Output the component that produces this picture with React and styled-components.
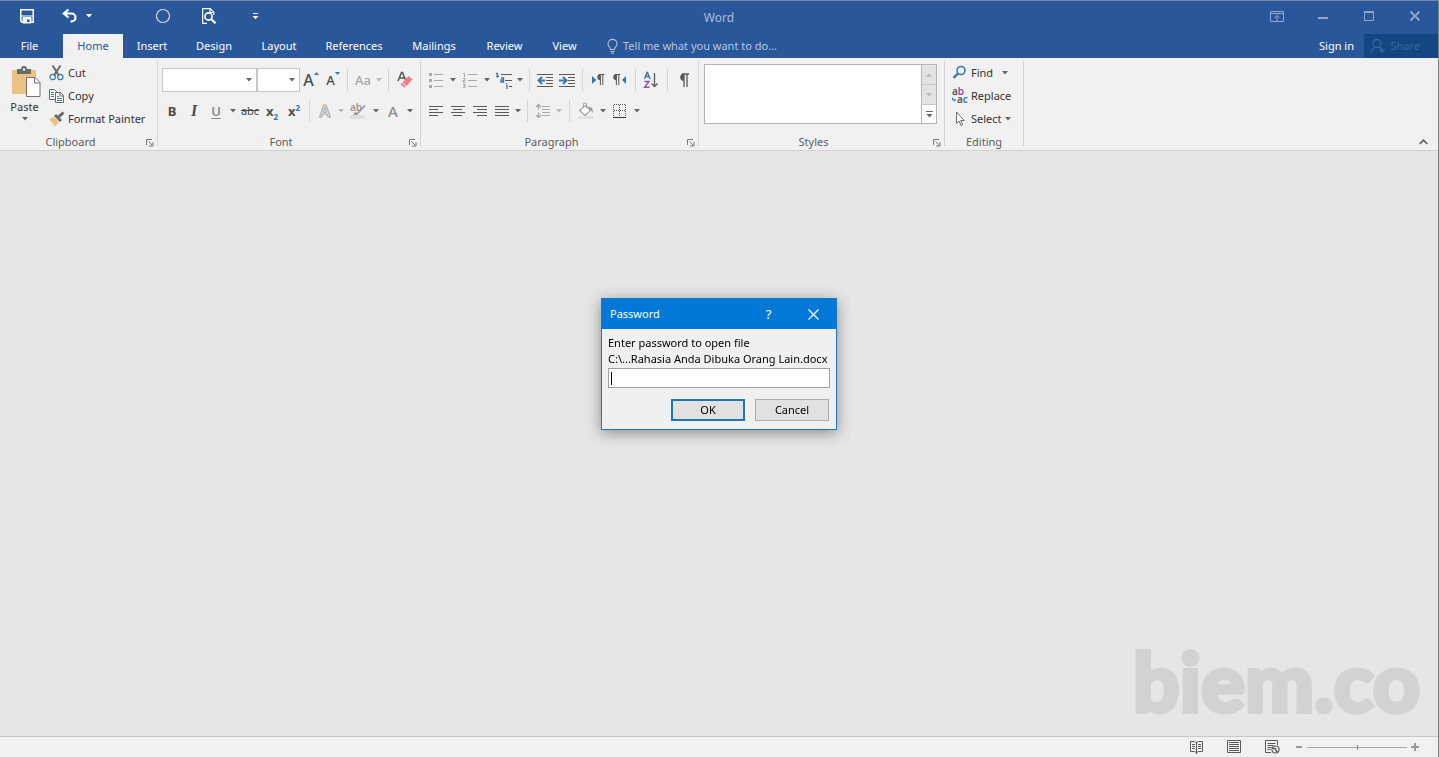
import React from 'react';
import styled, { createGlobalStyle, css } from 'styled-components';

const BLUE = '#2a579a';
const INK = '#5a5a5a';
const PALE = '#a8a8a8';
const ACCENT = '#3b78b0';

const GlobalStyle = createGlobalStyle`
	* {
		box-sizing: border-box;
	}
	body {
		margin: 0;
		font-family: 'Noto Sans', 'Open Sans', sans-serif;
		font-size: 11px;
		line-height: 16px;
		color: #333;
	}
	button, input, select {
		font: inherit;
		color: inherit;
	}
	svg {
		display: block;
		flex: none;
		overflow: visible;
	}
`;

/* ---------- shared ---------- */

const Icon = ({ w = 16, h = 16, children }) => (
	<svg width={w} height={h} viewBox={`0 0 ${w} ${h}`} fill="none" aria-hidden="true">
		{children}
	</svg>
);

const Caret = ({ color = '#666' }) => (
	<Icon w={6} h={4}>
		<path d="M0 0h6L3 3.5z" fill={color} />
	</Icon>
);

const lines = rows => rows.map(([x1, x2, y]) => `M${x1} ${y}.5H${x2}`).join('');

const Lines = ({ rows, color = INK }) => <path d={lines(rows)} stroke={color} />;

const PlainButton = styled.button`
	display: flex;
	align-items: center;
	justify-content: center;
	padding: 0;
	border: 0;
	background: none;
`;

/* ---------- title bar ---------- */

const TitleBar = styled.header`
	display: grid;
	grid-template-columns: 1fr auto 1fr;
	align-items: start;
	height: 34px;
	border-top: 1px solid #6f85a6;
	background: ${BLUE};
	color: #fff;
`;

const QuickAccess = styled.div`
	display: flex;
	align-items: center;
	height: 30px;
	padding-left: 4px;
`;

const QuickButton = styled(PlainButton)`
	width: 46px;
	height: 30px;
	gap: 8px;
`;

const UndoButton = styled(QuickButton)`
	width: 54px;
	margin-right: 36px;
`;

const Title = styled.h1`
	align-self: center;
	margin: 0;
	font-size: 12px;
	font-weight: 400;
	color: #a9bcd9;
`;

const WindowButtons = styled.div`
	display: flex;
	justify-content: flex-end;
	height: 30px;
`;

const WindowButton = styled(PlainButton)`
	width: 46px;
	height: 30px;
	color: #8da6cc;
`;

/* ---------- tabs ---------- */

const TabBar = styled.nav`
	display: flex;
	align-items: stretch;
	height: 24px;
	background: ${BLUE};
	color: #fff;
`;

const Tab = styled(PlainButton)`
	width: ${p => p.$width}px;
	color: ${p => (p.$active ? BLUE : '#fff')};
	background: ${p => (p.$active ? '#f1f1f1' : 'none')};
`;

const TellMe = styled(PlainButton)`
	gap: 5px;
	margin-left: 16px;
	color: #b5c6e0;
`;

const Account = styled.div`
	display: flex;
	margin-left: auto;
	gap: 10px;
`;

const ShareButton = styled(PlainButton)`
	width: 74px;
	gap: 4px;
	padding-right: 18px;
	justify-content: flex-end;
	background: #164583;
	color: #3865a3;
`;

/* ---------- ribbon ---------- */

const Ribbon = styled.section`
	display: flex;
	height: 93px;
	border-bottom: 1px solid #d2d2d2;
	background: #f1f1f1;
`;

const Group = styled.div`
	display: flex;
	flex-direction: column;
	width: ${p => p.$width}px;
	margin: 3px 0 4px;
	border-right: 1px solid #d4d4d4;
`;

const GroupBody = styled.div`
	flex: 1;
	display: flex;
	flex-direction: ${p => (p.$rows ? 'column' : 'row')};
	gap: ${p => (p.$rows ? 7 : 0)}px;
	padding: ${p => p.$pad || '0'};
`;

const GroupFooter = styled.div`
	display: flex;
	align-items: center;
	height: 16px;
	margin-bottom: -4px;
	color: #5c5c5c;
`;

const GroupName = styled.span`
	flex: 1;
	text-align: center;
`;

const Launcher = styled(PlainButton)`
	width: 16px;
	height: 14px;
`;

const ToolRow = styled.div`
	display: flex;
	align-items: center;
	height: 24px;
`;

const Tool = styled(PlainButton)`
	width: ${p => p.$width || 22}px;
	height: 22px;
`;

const Rule = styled.span`
	width: 1px;
	height: 22px;
	margin: 0 ${p => p.$gap || 4}px;
	background: #d4d4d4;
`;

const Combo = styled.label`
	display: grid;
	align-items: center;
	justify-items: end;
	width: ${p => p.$width}px;
	height: 24px;
	margin-left: ${p => p.$lead || 0}px;
	border: 1px solid #c6c6c6;
	background: #fff;

	> * {
		grid-area: 1 / 1;
	}
	> svg {
		margin-right: 4px;
		pointer-events: none;
	}
`;

const ComboSelect = styled.select`
	width: 100%;
	height: 100%;
	border: 0;
	appearance: none;
	background: none;
	outline: none;
`;

const PasteButton = styled(PlainButton)`
	flex-direction: column;
	justify-content: flex-start;
	width: 49px;
	padding-top: 5px;
	gap: 2px;
`;

const Commands = styled.div`
	display: flex;
	flex-direction: column;
`;

const Command = styled(PlainButton)`
	justify-content: flex-start;
	height: 23px;
	gap: 3px;
	white-space: nowrap;

	svg:last-child {
		margin-left: ${p => p.$caretGap || 0}px;
	}
`;

const Gallery = styled.div`
	display: flex;
	width: 233px;
	height: 60px;
	border: 1px solid #b4b4b4;
	background: #fff;
`;

const GalleryButtons = styled.div`
	display: grid;
	grid-template-rows: 20px 20px 18px;
	width: 15px;
	margin-left: auto;
	border-left: 1px solid #b4b4b4;
`;

const GalleryButton = styled(PlainButton)`
	${p =>
		p.disabled &&
		css`
			background: #e3e3e3;
			border-bottom: 1px solid #c6c6c6;
		`}
`;

const Collapse = styled(PlainButton)`
	align-self: flex-end;
	width: 18px;
	height: 16px;
	margin: 0 6px 0 auto;
`;

/* ---------- workspace & status ---------- */

const AppContainer = styled.div`
	display: flex;
	flex-direction: column;
	min-height: 100vh;
	border-right: 1px solid #7d8187;
	background: #e6e6e6;
`;

const Workspace = styled.main`
	flex: 1;
	display: flex;
	align-items: flex-end;
	justify-content: flex-end;
	padding: 0 18px 14px 0;
`;

const Watermark = styled.span`
	font-family: Lato, sans-serif;
	font-weight: 900;
	font-size: 82px;
	line-height: 84px;
	color: #d2d2d2;
	-webkit-text-stroke: 4px #d2d2d2;
`;

const StatusBar = styled.footer`
	display: flex;
	align-items: center;
	justify-content: flex-end;
	height: 21px;
	padding-right: 15px;
	border-top: 1px solid #c8c8c8;
	background: #f1f1f1;
`;

const ViewButton = styled(PlainButton)`
	width: 38px;
	height: 20px;
`;

const ZoomButton = styled(PlainButton)`
	width: 16px;
	height: 20px;
`;

const ZoomRange = styled.input`
	width: 100px;
	height: 9px;
	margin: 0;
	appearance: none;
	background: linear-gradient(#a6a6a6, #a6a6a6) center / 100% 1px no-repeat;

	&::-webkit-slider-thumb {
		appearance: none;
		width: 1px;
		height: 5px;
		background: #8a8a8a;
	}
`;

/* ---------- dialog ---------- */

const Overlay = styled.div`
	position: fixed;
	inset: 0;
	display: grid;
	place-items: center;
	padding: 0 1px 29px 0;
`;

const Dialog = styled.form`
	width: 236px;
	border: 1px solid #1a78c2;
	background: #f0f0f0;
	color: #000;
	box-shadow: 0 3px 14px rgba(0, 0, 0, 0.4);
`;

const DialogHeader = styled.div`
	display: flex;
	align-items: center;
	height: 30px;
	padding-left: 8px;
	background: #0078d7;
	color: #fff;
`;

const DialogTitle = styled.span`
	flex: 1;
`;

const DialogTool = styled(PlainButton)`
	width: 45px;
	height: 30px;
	font-size: 13px;
`;

const DialogBody = styled.div`
	display: flex;
	flex-direction: column;
	padding: 6px 6px 8px;
`;

const DialogLabel = styled.label`
	white-space: nowrap;
`;

const PasswordInput = styled.input`
	height: 20px;
	margin-top: 1px;
	padding: 0 3px;
	border: 1px solid #a0a0a0;
	border-radius: 0;
	background: linear-gradient(#000, #000) 2px center / 1px 13px no-repeat #fff;
	caret-color: transparent;
	outline: none;

	&:not(:placeholder-shown) {
		background: #fff;
		caret-color: #000;
	}
`;

const DialogButtons = styled.div`
	display: flex;
	justify-content: flex-end;
	gap: 10px;
	margin-top: 11px;
	padding-right: 1px;
`;

const DialogButton = styled.button`
	width: 74px;
	height: 22px;
	padding: 0;
	border: ${p => (p.$primary ? '2px solid #1a78b4' : '1px solid #adadad')};
	background: #e1e1e1;
`;

/* ---------- icons ---------- */

const SaveIcon = () => (
	<Icon w={14} h={14}>
		<path d="M.8.8h12.4v12.4H2L.8 12z" stroke="#fff" strokeWidth="1.500" />
		<path d="M1 7h12M3 8.500h8V14H3z" fill="#fff" stroke="#fff" />
		<path d="M7 10.500h2.500V13H7z" fill={BLUE} />
	</Icon>
);

const UndoIcon = () => (
	<Icon w={16} h={14}>
		<path d="M6.500.5L1.800 4.500l4.700 4M2 4.500h7.500a4 4 0 0 1 0 8H8.500" stroke="#fff" strokeWidth="2.200" />
	</Icon>
);

const CircleIcon = () => (
	<Icon>
		<circle cx="8" cy="8" r="6.5" stroke="#d5deec" strokeWidth="1.2" />
	</Icon>
);

const PreviewIcon = () => (
	<Icon>
		<path d="M6 15.300H1.700V.7h7.600l3.500 3.500V7M9 1v3.500h3.500" stroke="#fff" strokeWidth="1.2" />
		<circle cx="7.500" cy="8.500" r="3.600" stroke="#fff" strokeWidth="1.6" />
		<path d="M10 11l4.500 4.300" stroke="#fff" strokeWidth="2.2" />
	</Icon>
);

const CustomizeIcon = () => (
	<Icon w={7} h={7}>
		<path d="M1 .5h5" stroke="#fff" />
		<path d="M.5 3h6l-3 3.300z" fill="#fff" />
	</Icon>
);

const BulbIcon = () => (
	<Icon w={11} h={15}>
		<path d="M3.500 10.500C3.500 8 1 7.500 1 4.900a4.500 4.500 0 0 1 9 0c0 2.600-2.500 3.100-2.500 5.600zM3.500 12.500h4M4 14.300h3" stroke="#b5c6e0" strokeWidth="1.1" />
	</Icon>
);

const PersonIcon = () => (
	<Icon>
		<circle cx="7" cy="5.500" r="4" stroke="currentColor" strokeWidth="1.300" />
		<path d="M1 15c.3-3 2-4.500 4-5.500M9 9l2 2M12 10v5M9.500 12.500h5" stroke="currentColor" strokeWidth="1.300" />
	</Icon>
);

const PasteIcon = () => (
	<Icon w={28} h={31}>
		<path d="M1 4h24v24H1z" fill="#eac282" />
		<path d="M6 3h4a3 3 0 0 1 6 0h4v5H6z" fill="#6a6a6a" />
		<circle cx="13" cy="3.500" r="1.300" fill="#f1f1f1" />
		<path d="M15.500 11.500h8.500l5 5v14H15.500z" fill="#fff" stroke="#737373" />
		<path d="M23.500 11.500v5.500h5.500" stroke="#737373" />
	</Icon>
);

const CutIcon = () => (
	<Icon>
		<path d="M3.500.5l6.500 10M11.500.5L5 10.500" stroke="#6a6a6a" strokeWidth="2" />
		<circle cx="3.700" cy="12" r="2.700" stroke={ACCENT} strokeWidth="1.200" />
		<circle cx="11.300" cy="12" r="2.700" stroke={ACCENT} strokeWidth="1.200" />
	</Icon>
);

const CopyIcon = () => (
	<Icon>
		<path d="M.5 1.500h5l2 2v8h-7z" fill="#fff" stroke="#6a6a6a" />
		<path d="M2 4.500h3M2 6.500h3M2 8.500h3" stroke={ACCENT} />
		<path d="M6.500 4.500h5l3 3v7h-8z" fill="#fff" stroke="#6a6a6a" />
		<path d="M11 4.500V8h3.500" stroke="#6a6a6a" />
		<path d="M8 8.500h2M8 10.500h5M8 12.500h5" stroke={ACCENT} />
	</Icon>
);

const PainterIcon = () => (
	<Icon>
		<path d="M0 8l5-2 5 5-4 4.500z" fill="#eac282" />
		<path d="M5 5l2-2 6 6-2 2z" fill="#6a6a6a" />
		<path d="M9.500 6L14.500 1.500" stroke="#6a6a6a" strokeWidth="3" />
	</Icon>
);

const Letter = styled.span`
	font-size: ${p => p.$size || 14}px;
	line-height: 20px;
	font-weight: ${p => p.$weight || 600};
	color: ${p => p.$color || '#4c4c4c'};

	sup, sub {
		font-size: 8px;
		line-height: 8px;
		color: ${ACCENT};
	}
`;

const Italic = styled(Letter)`
	font-family: 'Liberation Serif', serif;
	font-style: italic;
	font-weight: 700;
`;

const Underlined = styled(Letter)`
	text-decoration: underline;
	text-underline-offset: 2px;
`;

const Outlined = styled(Letter)`
	color: #f1f1f1;
	-webkit-text-stroke: 1px ${PALE};
`;

const SizeMark = styled.span`
	align-self: flex-start;
	padding-top: 3px;
`;

const EraserIcon = () => (
	<Icon>
		<path d="M1 9L4.500.5h1L9 9M2.500 6h5" stroke="#555" strokeWidth="1.500" />
		<path d="M5.500 10.500l6-6.500 4 3.500-6 6.500z" fill="#ea7d92" />
		<path d="M4 11.500l4 3.500" stroke="#ea7d92" strokeWidth="1.800" />
	</Icon>
);

const HighlightIcon = () => (
	<Icon w={18} h={16}>
		<text x="1" y="8" fontSize="10" fontWeight="600" fill="#999">ab</text>
		<path d="M16 2.500L8 11l-2.500.5L7 9" stroke="#999" strokeWidth="1.800" />
		<path d="M1 12h15v4H1z" fill="#e2dfe2" />
	</Icon>
);

const BulletsIcon = () => (
	<Icon>
		<path d="M1 1h3v3H1zM1 7h3v3H1zM1 13h3v3H1z" fill={PALE} />
		<Lines rows={[[6, 15, 2], [6, 15, 8], [6, 15, 14]]} color={PALE} />
	</Icon>
);

const NumbersIcon = () => (
	<Icon>
		<path d="M1 1.500h1.500V5M1 6.500h2v2H1v1.500h2.500M1 12h2v3.500H1M1.500 13.500H3" stroke={PALE} />
		<Lines rows={[[6, 15, 2], [6, 15, 8], [6, 15, 14]]} color={PALE} />
	</Icon>
);

const MultilevelIcon = () => (
	<Icon w={17} h={17}>
		<path d="M0 1.500h1.500V5M0 4.500h3M5 6h2.500v4H5V8h2.500M10.500 11v1M10 13.500h1V17" stroke={ACCENT} strokeWidth="1.300" />
		<Lines rows={[[5, 16, 2], [9, 16, 8], [13, 16, 14]]} />
	</Icon>
);

const IndentIcon = ({ out }) => (
	<Icon>
		<Lines rows={[[0, 16, 2], [9, 16, 5], [9, 16, 8], [9, 16, 11], [0, 16, 14]]} />
		<path d={out ? 'M5 5L1.500 8.500 5 12M2 8.500h6' : 'M4 5l3.500 3.500L4 12M7 8.500H0'} stroke={ACCENT} strokeWidth="2" />
	</Icon>
);

const PilcrowShape = ({ x = 0, size = 1 }) => (
	<g transform={`translate(${x} 0) scale(${size})`}>
		<path d="M6 2h7M8 2v13M11 2v13" stroke={INK} strokeWidth="1.300" />
		<path d="M8 1.400v7.600A3.800 3.800 0 0 1 8 1.400z" fill={INK} />
	</g>
);

const LtrIcon = () => (
	<Icon w={14} h={14}>
		<path d="M1 3l4.500 4L1 11z" fill={ACCENT} />
		<PilcrowShape x={3} size={0.8} />
	</Icon>
);

const RtlIcon = () => (
	<Icon w={14} h={14}>
		<path d="M13 3L9 7l4 4z" fill={ACCENT} />
		<PilcrowShape x={-3} size={0.8} />
	</Icon>
);

const SortIcon = () => (
	<Icon w={16} h={18}>
		<path d="M1.500 8L4 1.500h.5L7 8M2.500 5.500h4" stroke={ACCENT} strokeWidth="1.400" />
		<path d="M1.500 10.500H6L1.500 16.300h5" stroke="#9150a8" strokeWidth="1.400" />
		<path d="M11.500 2v13.500M8.500 12.500l3 3 3-3" stroke={INK} strokeWidth="1.300" />
	</Icon>
);

const AlignIcon = ({ kind }) => {
	const short = { left: [1, 10], center: [3, 12], right: [5, 15], justify: [1, 15] }[kind];
	return (
		<Icon>
			<Lines rows={[[1, 15, 3], [...short, 6], [1, 15, 9], [...short, 12]]} />
		</Icon>
	);
};

const SpacingIcon = () => (
	<Icon>
		<path d="M3.500 1.500v5M3.500 9.500v5M1 4l2.500-2.500L6 4M1 12l2.500 2.500L6 12" stroke={PALE} strokeWidth="1.400" />
		<Lines rows={[[7, 15, 3], [7, 15, 6], [7, 15, 9], [7, 15, 12]]} color={PALE} />
	</Icon>
);

const BucketIcon = () => (
	<Icon>
		<path d="M1.500 7.500l6-5 5 5-5.500 5zM5.500 5V1.500a1.500 1.500 0 0 1 3 0V5" fill="#fff" stroke="#a0a0a0" strokeWidth="1.100" />
		<path d="M10 3.500c4 .5 5.500 2.500 4.500 7-1-3-2-4-3-4z" fill="#999" />
		<path d="M0 13h15v3H0z" fill="#e2dfe2" />
	</Icon>
);

const BordersIcon = () => (
	<Icon w={14} h={14}>
		<path d="M1 .5h12M1 6.500h12M.5 1v12M6.500 1v12M12.500 1v12" stroke={INK} strokeDasharray="1 1" />
		<path d="M0 13.500h13" stroke="#333" />
	</Icon>
);

const FindIcon = () => (
	<Icon>
		<circle cx="9" cy="5.500" r="4" stroke={ACCENT} strokeWidth="1.600" />
		<path d="M6 8.500L1.500 13" stroke={ACCENT} strokeWidth="2.400" />
	</Icon>
);

const ReplaceIcon = () => (
	<Icon>
		<text x="0" y="7" fontSize="10" fontWeight="600" fill="#555">
			a<tspan fill="#8a4fa5">b</tspan>
		</text>
		<text x="5" y="15" fontSize="10" fontWeight="600" fill="#555">
			a<tspan fill={ACCENT}>c</tspan>
		</text>
		<path d="M.5 9.500v2.500h3M2 10.500L3.500 12 2 13.500" stroke={ACCENT} />
	</Icon>
);

const SelectIcon = () => (
	<Icon>
		<path d="M4.500 1v11.500L7 10l2 4.500 1.700-.8-2-4.200h3.500z" fill="#fff" stroke="#6a6a6a" />
	</Icon>
);

const LauncherIcon = () => (
	<Icon w={9} h={9}>
		<path d="M1.500 7V1.500H7M3.500 3.500L7 7M8 4v4H4" stroke="#777" />
	</Icon>
);

const ReadIcon = () => (
	<Icon w={15} h={14}>
		<path d="M7.500 2.500L5.500 1.500h-4v10h4l2 1 2-1h4v-10h-4zM7.500 2v12" stroke={INK} />
		<path d="M3 4.500h3M3 6.500h3M3 8.500h3M9 4.500h3M9 6.500h3M9 8.500h3" stroke={INK} />
	</Icon>
);

const PrintIcon = () => (
	<Icon w={15} h={14}>
		<path d="M.5.5h13v12H.5z" stroke={INK} />
		<Lines rows={[[2, 12, 2], [2, 12, 4], [2, 12, 6], [2, 12, 8], [2, 12, 10]]} />
	</Icon>
);

const WebIcon = () => (
	<Icon w={15} h={14}>
		<path d="M6 12.500H.5V.500h12V5M2.500 3.500h8M2.500 5.500h6M2.500 7.500h4M2.500 9.500h3" stroke={INK} />
		<circle cx="10.500" cy="9.500" r="3.500" fill="#f1f1f1" stroke={INK} strokeWidth="1.200" />
		<path d="M8 7.500l3 .5.5 2 1.500 1.500-2 1-1-3-2-.5z" fill={INK} />
	</Icon>
);

/* ---------- parts ---------- */

const CaretTool = ({ width = 12, pale, label }) => (
	<Tool $width={width} aria-label={label}>
		<Caret color={pale ? '#b8b8b8' : '#666'} />
	</Tool>
);

const GroupLabel = ({ children, launcher = true }) => (
	<GroupFooter>
		<GroupName>{children}</GroupName>
		{launcher && (
			<Launcher aria-label={`${children} settings`}>
				<LauncherIcon />
			</Launcher>
		)}
	</GroupFooter>
);

const tabs = [
	['File', 59],
	['Home', 60],
	['Insert', 58],
	['Design', 66],
	['Layout', 64],
	['References', 86],
	['Mailings', 74],
	['Review', 67],
	['View', 53],
];

const TabSpacer = styled.span`
	width: 4px;
`;

const Clipboard = () => (
	<Group $width={158}>
		<GroupBody>
			<PasteButton>
				<PasteIcon />
				Paste
				<Caret />
			</PasteButton>
			<Commands>
				<Command><CutIcon /><span>Cut</span></Command>
				<Command><CopyIcon /><span>Copy</span></Command>
				<Command><PainterIcon /><span>Format Painter</span></Command>
			</Commands>
		</GroupBody>
		<GroupLabel>Clipboard</GroupLabel>
	</Group>
);

const FontGroup = () => (
	<Group $width={263}>
		<GroupBody $rows $pad="7px 0 0 3px">
			<ToolRow>
				<Combo $width={95} $lead={1}>
					<ComboSelect aria-label="Font" />
					<Caret />
				</Combo>
				<Combo $width={43}>
					<ComboSelect aria-label="Font size" />
					<Caret />
				</Combo>
				<Tool aria-label="Increase font size">
					<Letter $size={16} $weight={500}>A</Letter>
					<SizeMark><Icon w={5} h={3}><path d="M0 3h5L2.500 0z" fill={ACCENT} /></Icon></SizeMark>
				</Tool>
				<Tool aria-label="Decrease font size">
					<Letter $size={13} $weight={500}>A</Letter>
					<SizeMark><Icon w={5} h={3}><path d="M0 0h5L2.500 3z" fill={ACCENT} /></Icon></SizeMark>
				</Tool>
				<Rule $gap={3} />
				<Tool $width={24} aria-label="Change case"><Letter $size={13} $weight={500} $color={PALE}>Aa</Letter></Tool>
				<CaretTool width={8} pale label="Case options" />
				<Rule $gap={5} />
				<Tool aria-label="Clear formatting"><EraserIcon /></Tool>
			</ToolRow>
			<ToolRow>
				<Tool aria-label="Bold"><Letter $size={13} $weight={700}>B</Letter></Tool>
				<Tool aria-label="Italic"><Italic $size={16}>I</Italic></Tool>
				<Tool aria-label="Underline"><Underlined $size={13} $color="#8c8c8c">U</Underlined></Tool>
				<CaretTool label="Underline options" />
				<Tool aria-label="Strikethrough"><Letter $size={11} $weight={400}><s>abc</s></Letter></Tool>
				<Tool aria-label="Subscript"><Letter $size={13} $weight={700}>x<sub>2</sub></Letter></Tool>
				<Tool aria-label="Superscript"><Letter $size={13} $weight={700}>x<sup>2</sup></Letter></Tool>
				<Rule />
				<Tool aria-label="Text effects"><Outlined $size={16}>A</Outlined></Tool>
				<CaretTool width={10} pale label="Effect options" />
				<Tool $width={24} aria-label="Highlight"><HighlightIcon /></Tool>
				<CaretTool label="Highlight options" />
				<Tool aria-label="Font color"><Letter $size={15} $weight={500} $color="#8c8c8c">A</Letter></Tool>
				<CaretTool label="Font color options" />
			</ToolRow>
		</GroupBody>
		<GroupLabel>Font</GroupLabel>
	</Group>
);

const Paragraph = () => (
	<Group $width={278}>
		<GroupBody $rows $pad="7px 0 0 4px">
			<ToolRow>
				<Tool aria-label="Bullets"><BulletsIcon /></Tool>
				<CaretTool label="Bullet options" />
				<Tool aria-label="Numbering"><NumbersIcon /></Tool>
				<CaretTool label="Numbering options" />
				<Tool aria-label="Multilevel list"><MultilevelIcon /></Tool>
				<CaretTool width={10} label="Multilevel options" />
				<Rule />
				<Tool aria-label="Decrease indent"><IndentIcon out /></Tool>
				<Tool aria-label="Increase indent"><IndentIcon /></Tool>
				<Rule />
				<Tool aria-label="Left to right"><LtrIcon /></Tool>
				<Tool aria-label="Right to left"><RtlIcon /></Tool>
				<Rule />
				<Tool aria-label="Sort"><SortIcon /></Tool>
				<Rule $gap={5} />
				<Tool aria-label="Show marks"><Icon><PilcrowShape /></Icon></Tool>
			</ToolRow>
			<ToolRow>
				<Tool aria-label="Align left"><AlignIcon kind="left" /></Tool>
				<Tool aria-label="Center"><AlignIcon kind="center" /></Tool>
				<Tool aria-label="Align right"><AlignIcon kind="right" /></Tool>
				<Tool aria-label="Justify"><AlignIcon kind="justify" /></Tool>
				<CaretTool width={10} label="Justify options" />
				<Rule />
				<Tool aria-label="Line spacing"><SpacingIcon /></Tool>
				<CaretTool width={10} pale label="Spacing options" />
				<Rule $gap={5} />
				<Tool aria-label="Shading"><BucketIcon /></Tool>
				<CaretTool label="Shading options" />
				<Tool aria-label="Borders"><BordersIcon /></Tool>
				<CaretTool label="Border options" />
			</ToolRow>
		</GroupBody>
		<GroupLabel>Paragraph</GroupLabel>
	</Group>
);

const Styles = () => (
	<Group $width={246}>
		<GroupBody $pad="3px 0 0 5px">
			<Gallery>
				<GalleryButtons>
					<GalleryButton disabled aria-label="Previous styles">
						<Icon w={6} h={4}><path d="M0 4h6L3 .5z" fill="#bbb" /></Icon>
					</GalleryButton>
					<GalleryButton disabled aria-label="Next styles"><Caret color="#bbb" /></GalleryButton>
					<GalleryButton aria-label="More styles">
						<Icon w={7} h={7}><path d="M0 .5h7" stroke="#666" /><path d="M.5 3h6l-3 3.500z" fill="#666" /></Icon>
					</GalleryButton>
				</GalleryButtons>
			</Gallery>
		</GroupBody>
		<GroupLabel>Styles</GroupLabel>
	</Group>
);

const Editing = () => (
	<Group $width={79}>
		<GroupBody $pad="0 0 0 7px">
			<Commands>
				<Command $caretGap={6}><FindIcon /><span>Find</span><Caret /></Command>
				<Command><ReplaceIcon /><span>Replace</span></Command>
				<Command><SelectIcon /><span>Select</span><Caret /></Command>
			</Commands>
		</GroupBody>
		<GroupLabel launcher={false}>Editing</GroupLabel>
	</Group>
);

const PasswordDialog = () => (
	<Overlay>
		<Dialog role="dialog" aria-label="Password" onSubmit={e => e.preventDefault()}>
			<DialogHeader>
				<DialogTitle>Password</DialogTitle>
				<DialogTool type="button" aria-label="Help">?</DialogTool>
				<DialogTool type="button" aria-label="Close">
					<Icon w={11} h={11}><path d="M.5.5l10 10M10.500.5l-10 10" stroke="#fff" strokeWidth="1.200" /></Icon>
				</DialogTool>
			</DialogHeader>
			<DialogBody>
				<DialogLabel htmlFor="password">
					Enter password to open file
					<br />
					C:\...Rahasia Anda Dibuka Orang Lain.docx
				</DialogLabel>
				<PasswordInput id="password" type="password" placeholder=" " autoFocus />
				<DialogButtons>
					<DialogButton $primary>OK</DialogButton>
					<DialogButton type="button">Cancel</DialogButton>
				</DialogButtons>
			</DialogBody>
		</Dialog>
	</Overlay>
);

function App() {
	return (
		<AppContainer>
			<GlobalStyle />
			<TitleBar>
				<QuickAccess>
					<QuickButton aria-label="Save"><SaveIcon /></QuickButton>
					<UndoButton aria-label="Undo"><UndoIcon /><Caret color="#fff" /></UndoButton>
					<QuickButton aria-label="Repeat"><CircleIcon /></QuickButton>
					<QuickButton aria-label="Print preview"><PreviewIcon /></QuickButton>
					<QuickButton aria-label="Customize toolbar"><CustomizeIcon /></QuickButton>
				</QuickAccess>
				<Title>Word</Title>
				<WindowButtons>
					<WindowButton aria-label="Ribbon display options">
						<Icon w={14} h={11}><path d="M.5.5h13v10H.5zM.5 2.500h13M7 10V4.500M4.500 7L7 4.500 9.500 7" stroke="currentColor" /></Icon>
					</WindowButton>
					<WindowButton aria-label="Minimize">
						<Icon w={10} h={6}><path d="M0 5h10" stroke="currentColor" strokeWidth="2" /></Icon>
					</WindowButton>
					<WindowButton aria-label="Maximize">
						<Icon w={10} h={10}><path d="M.5.5h9v9h-9zM.5 1.500h9" stroke="currentColor" /></Icon>
					</WindowButton>
					<WindowButton aria-label="Close">
						<Icon w={10} h={10}><path d="M.5.5l9 9M9.500.5l-9 9" stroke="currentColor" strokeWidth="1.800" /></Icon>
					</WindowButton>
				</WindowButtons>
			</TitleBar>
			<TabBar>
				{tabs.map(([name, width]) => (
					<React.Fragment key={name}>
						<Tab $width={width} $active={name === 'Home'}>{name}</Tab>
						{name === 'File' && <TabSpacer />}
					</React.Fragment>
				))}
				<TellMe><BulbIcon />Tell me what you want to do...</TellMe>
				<Account>
					<Tab>Sign in</Tab>
					<ShareButton><PersonIcon />Share</ShareButton>
				</Account>
			</TabBar>
			<Ribbon>
				<Clipboard />
				<FontGroup />
				<Paragraph />
				<Styles />
				<Editing />
				<Collapse aria-label="Collapse ribbon">
					<Icon w={9} h={6}><path d="M.7 5L4.500 1.200 8.300 5" stroke={INK} strokeWidth="1.600" /></Icon>
				</Collapse>
			</Ribbon>
			<Workspace>
				<Watermark>biem.co</Watermark>
			</Workspace>
			<StatusBar>
				<ViewButton aria-label="Read mode"><ReadIcon /></ViewButton>
				<ViewButton aria-label="Print layout"><PrintIcon /></ViewButton>
				<ViewButton aria-label="Web layout"><WebIcon /></ViewButton>
				<ZoomButton aria-label="Zoom out">
					<Icon w={8} h={8}><path d="M1 4h6" stroke="#999" strokeWidth="2" /></Icon>
				</ZoomButton>
				<ZoomRange type="range" aria-label="Zoom" min="0" max="100" defaultValue="50" />
				<ZoomButton aria-label="Zoom in">
					<Icon w={8} h={8}><path d="M0 4h8M4 0v8" stroke="#999" strokeWidth="2" /></Icon>
				</ZoomButton>
			</StatusBar>
			<PasswordDialog />
		</AppContainer>
	);
}

export default App;
